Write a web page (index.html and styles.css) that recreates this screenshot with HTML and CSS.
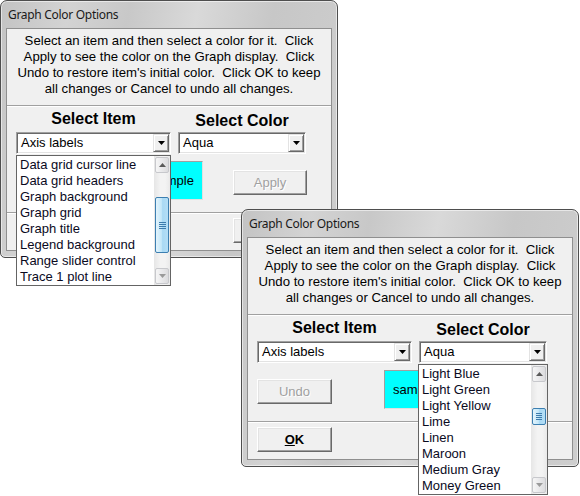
FILE: index.html
```html
<!DOCTYPE html>
<html>
<head>
<meta charset="utf-8">
<link rel="stylesheet" href="styles.css">
</head>
<body>
<div class="desk">

  <div class="win w1">
    <div class="title">Graph Color Options</div>
    <div class="client">
      <div class="info">Select an item and then select a color for it.&nbsp; Click<br>Apply to see the color on the Graph display.&nbsp; Click<br>Undo to restore item's initial color.&nbsp; Click OK to keep<br>all changes or Cancel to undo all changes.</div>
      <div class="sep"></div>
      <div class="controls">
        <div class="labels">
          <div class="lab lab1">Select Item</div>
          <div class="lab lab2">Select Color</div>
        </div>
        <div class="combos">
          <div class="combo c1"><span class="val">Axis labels</span><span class="dd"><svg width="7" height="4" viewBox="0 0 7 4"><path d="M0 0H7L3.5 4Z" fill="#000"/></svg></span></div>
          <div class="combo c2"><span class="val">Aqua</span><span class="dd"><svg width="7" height="4" viewBox="0 0 7 4"><path d="M0 0H7L3.5 4Z" fill="#000"/></svg></span></div>
        </div>
        <div class="row2">
          <div class="btn b-undo disabled">Undo</div>
          <div class="sample">sample</div>
          <div class="btn b-apply disabled">Apply</div>
        </div>
      </div>
      <div class="sep"></div>
      <div class="bottom">
        <div class="btn b-ok"><span class="ul">O</span>K</div>
        <div class="btn b-cancel">Cancel</div>
      </div>
    </div>
    <div class="list l1">
      <div class="items">
        <div class="it">Data grid cursor line</div>
        <div class="it">Data grid headers</div>
        <div class="it">Graph background</div>
        <div class="it">Graph grid</div>
        <div class="it">Graph title</div>
        <div class="it">Legend background</div>
        <div class="it">Range slider control</div>
        <div class="it">Trace 1 plot line</div>
      </div>
      <div class="sb">
        <div class="arr"><svg width="7" height="4" viewBox="0 0 7 4"><path d="M0 4H7L3.5 0Z" fill="#5a5a5a"/></svg></div>
        <div class="thumb t1"><span class="grip"></span><span class="grip"></span><span class="grip"></span><span class="grip"></span></div>
        <div class="arr down"><svg width="7" height="4" viewBox="0 0 7 4"><path d="M0 0H7L3.5 4Z" fill="#9a9a9a"/></svg></div>
      </div>
    </div>
  </div>

  <div class="win w2">
    <div class="title">Graph Color Options</div>
    <div class="client">
      <div class="info">Select an item and then select a color for it.&nbsp; Click<br>Apply to see the color on the Graph display.&nbsp; Click<br>Undo to restore item's initial color.&nbsp; Click OK to keep<br>all changes or Cancel to undo all changes.</div>
      <div class="sep"></div>
      <div class="controls">
        <div class="labels">
          <div class="lab lab1">Select Item</div>
          <div class="lab lab2">Select Color</div>
        </div>
        <div class="combos">
          <div class="combo c1"><span class="val">Axis labels</span><span class="dd"><svg width="7" height="4" viewBox="0 0 7 4"><path d="M0 0H7L3.5 4Z" fill="#000"/></svg></span></div>
          <div class="combo c2"><span class="val">Aqua</span><span class="dd"><svg width="7" height="4" viewBox="0 0 7 4"><path d="M0 0H7L3.5 4Z" fill="#000"/></svg></span></div>
        </div>
        <div class="row2">
          <div class="btn b-undo disabled">Undo</div>
          <div class="sample">sample</div>
          <div class="btn b-apply disabled">Apply</div>
        </div>
      </div>
      <div class="sep"></div>
      <div class="bottom">
        <div class="btn b-ok"><span class="ul">O</span>K</div>
        <div class="btn b-cancel">Cancel</div>
      </div>
    </div>
    <div class="list l2">
      <div class="items">
        <div class="it">Light Blue</div>
        <div class="it">Light Green</div>
        <div class="it">Light Yellow</div>
        <div class="it">Lime</div>
        <div class="it">Linen</div>
        <div class="it">Maroon</div>
        <div class="it">Medium Gray</div>
        <div class="it">Money Green</div>
      </div>
      <div class="sb">
        <div class="arr"><svg width="7" height="4" viewBox="0 0 7 4"><path d="M0 4H7L3.5 0Z" fill="#5a5a5a"/></svg></div>
        <div class="thumb t2"><span class="grip"></span><span class="grip"></span><span class="grip"></span><span class="grip"></span></div>
        <div class="arr down"><svg width="7" height="4" viewBox="0 0 7 4"><path d="M0 0H7L3.5 4Z" fill="#9a9a9a"/></svg></div>
      </div>
    </div>
  </div>

</div>
</body>
</html>
```

FILE: styles.css
```css
html, body {
  margin: 0;
  padding: 0;
  background: #ffffff;
}

.desk {
  position: relative;
  width: 580px;
  height: 496px;
  overflow: hidden;
  font-family: "Liberation Sans", Arial, sans-serif;
  font-size: 13px;
  color: #000;
}

.win {
  position: absolute;
  width: 338px;
  height: 258px;
  box-sizing: border-box;
  border: 1px solid #4e4e4e;
  border-radius: 7px 7px 5px 5px;
  padding: 0 5px 6px 5px;
  background: linear-gradient(100deg, #c3c3c3 0%, #d3d3d3 18%, #c8c8c8 34%, #d9d9d9 52%, #c7c7c7 72%, #cecece 100%);
  box-shadow: inset 0 0 0 1px rgba(255, 255, 255, 0.55);
}

.w1 { left: 0; top: 0; }
.w2 { left: 241px; top: 209px; }

.title {
  height: 27px;
  box-sizing: border-box;
  padding: 6px 0 0 2px;
  font-family: "Noto Sans", "Open Sans", sans-serif;
  font-size: 12px;
  letter-spacing: -0.3px;
  line-height: 16px;
  color: #1a1a1a;
  white-space: nowrap;
}

.client {
  height: 223px;
  box-sizing: border-box;
  border: 1px solid #8f8f8f;
  background: #f0f0f0;
  display: flex;
  flex-direction: column;
}

.info {
  height: 76px;
  box-sizing: border-box;
  padding-top: 4px;
  font-size: 13.2px;
  line-height: 16px;
  text-align: center;
  white-space: nowrap;
}

.sep {
  height: 1px;
  background: #a0a0a0;
  border-bottom: 1px solid #ffffff;
}

.controls {
  height: 105px;
  box-sizing: border-box;
  padding: 3px 0 0 9px;
}

.labels {
  display: flex;
  align-items: flex-start;
}

.lab {
  font-weight: bold;
  font-size: 16px;
  line-height: 18px;
  text-align: center;
}

.lab1 { width: 155px; }
.lab2 { width: 128px; margin-left: 7px; padding-top: 2px; }

.combos {
  display: flex;
  margin-top: 2px;
}

.combo {
  height: 22px;
  box-sizing: border-box;
  background: #fff;
  border-style: solid;
  border-width: 1px;
  border-color: #a0a0a0 #ffffff #ffffff #a0a0a0;
  box-shadow: inset 1px 1px 0 #696969, inset -1px -1px 0 #e3e3e3;
  display: flex;
  align-items: stretch;
}

.c1 { width: 155px; }
.c2 { width: 128px; margin-left: 7px; }

.val {
  flex: 1;
  padding: 1px 0 0 4px;
  line-height: 18px;
}

.dd {
  width: 16px;
  margin: 1px 1px 1px 0;
  box-sizing: border-box;
  background: #f0f0f0;
  border-style: solid;
  border-width: 1px;
  border-color: #e3e3e3 #696969 #696969 #e3e3e3;
  box-shadow: inset 1px 1px 0 #fff, inset -1px -1px 0 #a0a0a0;
  display: flex;
  align-items: center;
  justify-content: center;
}

.row2 {
  display: flex;
  align-items: flex-start;
  margin-top: 7px;
}

.btn {
  width: 75px;
  height: 25px;
  box-sizing: border-box;
  background: #f0f0f0;
  border-style: solid;
  border-width: 1px;
  border-color: #ffffff #696969 #696969 #ffffff;
  box-shadow: inset -1px -1px 0 #a0a0a0, inset 1px 1px 0 #e3e3e3;
  display: flex;
  align-items: center;
  justify-content: center;
  line-height: 16px;
}

.disabled {
  color: #a0a0a0;
  text-shadow: 1px 1px 0 #ffffff;
}

.b-undo { margin-top: 9px; }
.b-apply { margin-top: 9px; margin-left: 30px; width: 74px; }

.sample {
  width: 60px;
  height: 39px;
  box-sizing: border-box;
  margin-left: 52px;
  background: #00ffff;
  border: 1px solid #a0a0a0;
  border-right-color: #e0e0e0;
  border-bottom-color: #e0e0e0;
  display: flex;
  align-items: center;
  justify-content: center;
}

.bottom {
  flex: 1;
  display: flex;
  align-items: flex-start;
  padding: 4px 0 0 9px;
}

.b-ok { font-weight: bold; }
.b-cancel { margin-left: 142px; width: 74px; }
.ul { text-decoration: underline; }

.list {
  position: absolute;
  top: 154px;
  height: 131px;
  box-sizing: border-box;
  border: 1px solid #646464;
  background: #fff;
  display: flex;
}

.l1 { left: 15px; width: 155px; }
.l2 { left: 176px; width: 130px; }

.items {
  flex: 1;
  padding-top: 1px;
  overflow: hidden;
}

.it {
  height: 16px;
  line-height: 16px;
  padding-left: 3px;
  white-space: nowrap;
  color: #0a0a1e;
}

.sb {
  width: 16px;
  background: linear-gradient(to right, #e6e6e6, #f3f3f3 40%, #f3f3f3 70%, #e9e9e9);
  display: flex;
  flex-direction: column;
  padding: 1px 0;
  box-sizing: border-box;
}

.arr {
  height: 16px;
  margin: 0 1px;
  box-sizing: border-box;
  border: 1px solid #c7c8cc;
  border-radius: 2px;
  background: linear-gradient(to right, #f6f6f6, #e9e9eb 50%, #dcdcde);
  display: flex;
  align-items: center;
  justify-content: center;
}

.down { margin-top: auto; }

.thumb {
  margin: 0 1px;
  box-sizing: border-box;
  border: 1px solid #3c7fb1;
  border-radius: 2px;
  background: linear-gradient(to right, #e3f4fc, #c4e7f9 45%, #a9d9f4 55%, #b4def6);
  display: flex;
  flex-direction: column;
  align-items: center;
  justify-content: center;
  gap: 1px;
}

.grip {
  width: 7px;
  height: 1px;
  background: #3d7bad;
}

.t1 { margin-top: 24px; height: 56px; }
.t2 { margin-top: 26px; height: 17px; }
.t2 .grip { width: 6px; }
```
